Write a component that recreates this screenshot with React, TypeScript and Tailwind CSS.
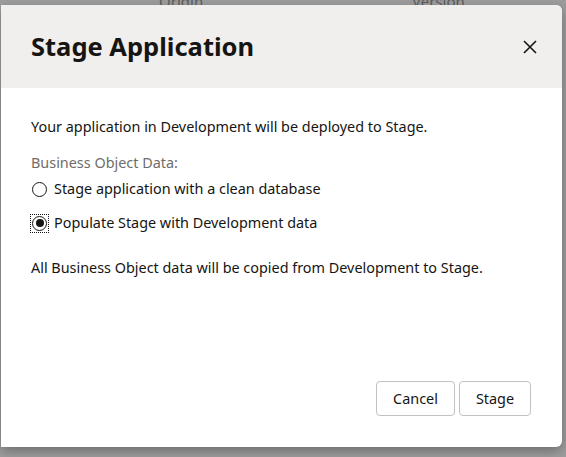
function Radio({ checked, focused, label }: { checked?: boolean; focused?: boolean; label: string }) {
  return (
    <label className="flex items-center gap-[7px] leading-5">
      <span className="relative ml-[1px] flex h-[15px] w-[15px] items-center justify-center rounded-full border border-[#161513]">
        {checked && <span className="h-[8px] w-[8px] rounded-full bg-[#161513]" />}
        {focused && (
          <span className="absolute left-[-3px] top-[-3px] h-[19px] w-[19px] border border-dotted border-[#161513]" />
        )}
      </span>
      {label}
    </label>
  );
}

export default function App() {
  return (
    <div
      className="relative h-[457px] w-[566px] overflow-hidden bg-[#9d9d9d]"
      style={{ fontFamily: '"Noto Sans", "Open Sans", sans-serif' }}
    >
      {/* page behind the overlay */}
      <span className="absolute left-[159px] top-[-10px] text-[15px] text-[#5c5c5c]">Origin</span>
      <span className="absolute left-[412px] top-[-10px] text-[15px] text-[#5c5c5c]">Version</span>

      <div className="absolute left-px top-[5px] flex h-[442px] w-[561px] flex-col overflow-hidden rounded-r-[6px] bg-white shadow-[0_4px_12px_rgba(0,0,0,0.3)]">
        <header className="flex h-[83px] shrink-0 items-center justify-between bg-[#f1efed] pl-[30px] pr-[20px]">
          <h1 className="text-[25.5px] font-bold leading-none text-[#161513]">Stage Application</h1>
          <button className="flex h-6 w-6 items-center justify-center text-[#161513]">
            <svg width="14" height="14" viewBox="0 0 14 14" fill="none" stroke="currentColor" strokeWidth="1.6">
              <path d="M1 1L13 13M13 1L1 13" />
            </svg>
          </button>
        </header>

        <div className="flex flex-1 flex-col px-[30px] pt-[29px] text-[14.4px] text-[#161513]">
          <p className="leading-5">Your application in Development will be deployed to Stage.</p>

          <div className="mt-[16px] leading-5 text-[#6f6c69]">Business Object Data:</div>
          <div className="mt-[6px]">
            <Radio label="Stage application with a clean database" />
          </div>
          <div className="mt-[14px]">
            <Radio checked focused label="Populate Stage with Development data" />
          </div>

          <p className="mt-[25px] leading-5">All Business Object data will be copied from Development to Stage.</p>

          <div className="mt-auto mb-[31px] flex justify-end gap-[4px] pr-[1px]">
            <button className="h-[35px] w-[79px] rounded-[4px] border border-[#c4c2c0] bg-white text-[14.4px] text-[#161513]">
              Cancel
            </button>
            <button className="h-[35px] w-[72px] rounded-[4px] border border-[#c4c2c0] bg-white text-[14.4px] text-[#161513]">
              Stage
            </button>
          </div>
        </div>
      </div>
    </div>
  );
}
